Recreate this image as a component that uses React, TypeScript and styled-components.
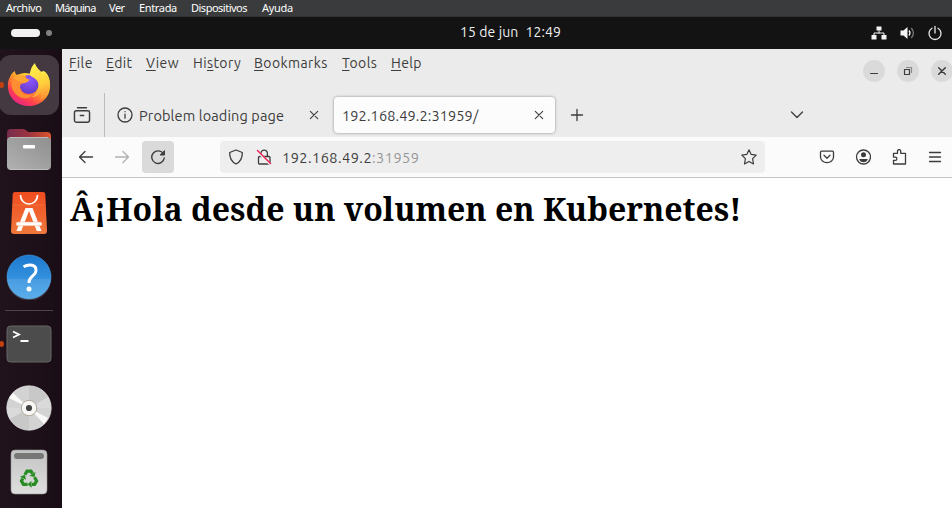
import React from "react";
import styled, { createGlobalStyle } from "styled-components";

const uiFont = `Ubuntu, "Noto Sans", "Open Sans", sans-serif`;

const GlobalStyle = createGlobalStyle`
  * { box-sizing: border-box; }
  body { margin: 0; overflow: hidden; background: #1d1018; }
  svg { display: block; flex: none; }
`;

const Screen = styled.div`
  width: 952px;
  height: 508px;
  display: flex;
  flex-direction: column;
  overflow: hidden;
  white-space: nowrap;
  font-family: ${uiFont};
`;

const HostMenu = styled.nav`
  height: 17px;
  flex: none;
  display: flex;
  padding-left: 6px;
  background: #3a3b3d;
  border-bottom: 1px solid #303133;
  color: #fff;
  font: 11px/16px "Noto Sans", sans-serif;
`;

const HostItem = styled.span<{ $w: number; $ls?: number }>`
  width: ${(p) => p.$w}px;
  letter-spacing: ${(p) => p.$ls ?? 0}px;
`;

const TopBar = styled.header`
  height: 32px;
  flex: none;
  display: grid;
  grid-template-columns: 1fr auto 1fr;
  align-items: center;
  background: #131313;
  color: #f0f0f0;
`;

const Workspaces = styled.div`
  display: flex;
  align-items: center;
  gap: 6px;
  padding-left: 11px;
`;

const Pill = styled.span`
  width: 29px;
  height: 8px;
  border-radius: 4px;
  background: #f2f0f1;
`;

const Dot = styled.span`
  width: 6px;
  height: 6px;
  border-radius: 50%;
  background: #828282;
`;

const Clock = styled.time`
  display: flex;
  gap: 7px;
  width: 101px;
  margin-left: 69px;
  padding-bottom: 2px;
  font-size: 14px;
  line-height: 20px;
  letter-spacing: 0.1px;
`;

const Tray = styled.div`
  display: flex;
  justify-content: flex-end;
  gap: 12px;
  padding-right: 9px;
`;

const Desktop = styled.div`
  flex: 1;
  display: flex;
  min-height: 0;
`;

const Dock = styled.aside`
  width: 62px;
  flex: none;
  padding-top: 4px;
  background: linear-gradient(90deg, #20131c, #1d1019 60%, #190d15);
`;

const DockSlot = styled.div<{ $running?: boolean }>`
  position: relative;
  height: 64px;
  width: 58px;
  display: flex;
  align-items: center;
  justify-content: center;
  &::before {
    content: "";
    display: ${(p) => (p.$running ? "block" : "none")};
    position: absolute;
    left: -1px;
    top: 29px;
    width: 5px;
    height: 6px;
    border-radius: 50%;
    background: #c2410f;
    z-index: 2;
  }
`;

const ActiveTile = styled.div`
  flex: none;
  width: 60px;
  height: 60px;
  border-radius: 12px;
  background: #443940;
  display: flex;
  align-items: center;
  justify-content: center;
`;

const DockRule = styled.div`
  height: 3px;
  margin: 0 9px 0 5px;
  border-top: 1px solid transparent;
  border-bottom: 1px solid transparent;
  background: #4c444a content-box;
`;

const Browser = styled.main`
  flex: 1;
  min-width: 0;
  display: flex;
  flex-direction: column;
  background: #fff;
  color: #3d3d3d;
`;

const Titlebar = styled.div`
  height: 44px;
  flex: none;
  display: flex;
  justify-content: space-between;
  background: #ebebeb;
`;

const Menus = styled.div`
  display: flex;
  padding: 4px 0 0 7px;
`;

const MenuItem = styled.span<{ $w: number }>`
  width: ${(p) => p.$w}px;
  font-size: 14px;
  line-height: 20px;
  letter-spacing: 0.4px;
  u {
    text-underline-offset: 2px;
    text-decoration-thickness: 1px;
  }
`;

const WindowButtons = styled.div`
  display: flex;
  gap: 12px;
  padding: 11px 0 0;
  margin-right: -1px;
`;

const WindowButton = styled.button`
  width: 22px;
  height: 22px;
  padding: 0;
  border: 0;
  border-radius: 50%;
  background: #dadada;
  display: grid;
  place-items: center;
`;

const TabStrip = styled.div`
  height: 44px;
  flex: none;
  display: flex;
  align-items: center;
  background: #ebebeb;
`;

const FirefoxView = styled.div`
  width: 43px;
  height: 44px;
  padding-left: 11px;
  display: flex;
  align-items: center;
  border-right: 1px solid #bdbdbd;
`;

const Tab = styled.div<{ $active?: boolean }>`
  height: 36px;
  width: ${(p) => (p.$active ? 221 : 217)}px;
  margin-left: ${(p) => (p.$active ? 1 : 11)}px;
  padding-left: ${(p) => (p.$active ? 8 : 1)}px;
  padding-right: ${(p) => (p.$active ? 8 : 11)}px;
  display: flex;
  align-items: center;
  border-radius: 4px;
  background: ${(p) => (p.$active ? "#fcfcfc" : "transparent")};
  box-shadow: ${(p) => (p.$active ? "0 0 3px rgba(0,0,0,.4)" : "none")};
`;

const TabLabel = styled.span<{ $indent?: number }>`
  flex: 1;
  padding-top: 2px;
  padding-left: ${(p) => p.$indent ?? 0}px;
  font-size: 14.5px;
  line-height: 20px;
  letter-spacing: 0.12px;
`;

const NewTab = styled.div`
  margin-left: 14px;
  flex: 1;
`;

const AllTabs = styled.div`
  margin-right: 147px;
`;

const NavBar = styled.div`
  height: 41px;
  flex: none;
  display: flex;
  align-items: center;
  padding-left: 16px;
  background: #fbfbfb;
  border-bottom: 1px solid #c4c4c4;
`;

const NavButton = styled.div<{ $ml?: number }>`
  margin-left: ${(p) => p.$ml ?? 0}px;
`;

const Reload = styled.button`
  width: 32px;
  height: 32px;
  margin-left: 12px;
  padding: 0;
  border: 0;
  border-radius: 4px;
  background: #dadada;
  display: grid;
  place-items: center;
`;

const UrlBar = styled.div`
  width: 545px;
  height: 32px;
  margin-left: 46px;
  padding: 0 8px;
  border-radius: 4px;
  background: #eee;
  display: flex;
  align-items: center;
`;

const Address = styled.span`
  flex: 1;
  margin-left: 10px;
  padding-top: 1px;
  font-size: 14.5px;
  line-height: 20px;
  letter-spacing: 0.48px;
`;

const Port = styled.span`
  color: #979797;
`;

const Tools = styled.div`
  display: flex;
  gap: 20px;
  margin-left: 54px;
`;

const Page = styled.article`
  flex: 1;
  padding: 8px;
`;

const Heading = styled.h1`
  margin: 0;
  color: #000;
  font-family: "Noto Serif", "Droid Serif", "DejaVu Serif Condensed", "DejaVu Serif", serif;
  font-size: 32px;
  line-height: 46px;
  font-weight: 700;
`;

type IconProps = { children: React.ReactNode; size?: number; color?: string; sw?: number };

const Icon = ({ children, size = 16, color = "#3d3d3d", sw = 1.3 }: IconProps) => (
  <svg width={size} height={size} viewBox="0 0 16 16" fill="none" stroke={color} strokeWidth={sw} strokeLinecap="round" strokeLinejoin="round">
    {children}
  </svg>
);

const CloseIcon = () => (
  <Icon sw={1.1}><path d="m4.300 4.300 7.400 7.400m0-7.400-7.400 7.400" /></Icon>
);

const FirefoxIcon = () => (
  <svg width="44" height="46" viewBox="0 0 44 46">
    <defs>
      <linearGradient id="ffBody" x1=".85" y1=".1" x2=".2" y2=".95">
        <stop offset="0" stopColor="#fff44f" /><stop offset=".28" stopColor="#ffc52e" />
        <stop offset=".5" stopColor="#ff8a2a" /><stop offset=".75" stopColor="#ff3f4f" /><stop offset="1" stopColor="#e6238b" />
      </linearGradient>
      <radialGradient id="ffGlobe" cx=".5" cy=".25" r=".8">
        <stop offset="0" stopColor="#9059ff" /><stop offset=".6" stopColor="#7344dd" /><stop offset="1" stopColor="#5b3bc1" />
      </radialGradient>
      <linearGradient id="ffFlame" x1=".5" y1="0" x2=".7" y2="1">
        <stop offset="0" stopColor="#fff04d" /><stop offset=".55" stopColor="#ffd03c" /><stop offset="1" stopColor="#ff8a35" />
      </linearGradient>
    </defs>
    <path d="M3 15c1-3 3-5 5-6 0 2 .6 3 2 4 2-1 5-2 8-2l8 1 11-3c4 3 6 7 6 15 0 12-10 20-21 20S2 37 1 26c-.3-4 0-8 2-11Z" fill="url(#ffBody)" />
    <circle cx="22" cy="22.500" r="9.600" fill="url(#ffGlobe)" />
    <path d="M28 1c1 5 5 7 8 11l2-2c4 5 5.500 10 4.500 15-1 6-4 10-9 13 1-4 1-6 0-8-2 4-5 5-9 5 6-3 8-9 7-13-1-5-5-6-9-9 1-5 2-9 5.500-12Z" fill="url(#ffFlame)" />
    <path d="M5 18c4-4 9-3 13-1l3.500 2c-2 1-3 2.500-6 2.500-2 0-3 3-2 6 2 5 7 6 12 5-3 5-10 5-15 1-5-4-7-9-5.500-15.500Z" fill="#ff8d31" />
    <path d="M6 16c3-3 8-3.500 12.500-2 0 2 1 3 4 3.500-.5 2-3 3-6 3-4 0-6-2-10.500-4.500Z" fill="#ffa533" />
  </svg>
);

const FilesIcon = () => (
  <svg width="46" height="44" viewBox="0 0 46 44">
    <defs>
      <linearGradient id="fBack" x1="0" x2="1"><stop stopColor="#762b4e" /><stop offset=".5" stopColor="#9d3340" /><stop offset="1" stopColor="#dd552c" /></linearGradient>
      <linearGradient id="fFront" x1="1" x2="0" y2="1"><stop stopColor="#8f8f8f" /><stop offset="1" stopColor="#b1b1b1" /></linearGradient>
    </defs>
    <path d="M1 18V6q0-4 4-4h12q2 0 3.500 1.500L22 5h19q4 0 4 4v9Z" fill="url(#fBack)" />
    <rect x="1" y="10" width="44" height="33" rx="4" fill="url(#fFront)" />
    <path d="M4 10.500h38M4 42.500h38" stroke="#c8c8c8" strokeWidth=".7" />
    <rect x="17" y="18" width="12" height="3.500" rx="1" fill="#fff" />
  </svg>
);

const SoftwareIcon = () => (
  <svg width="38" height="44" viewBox="0 0 38 44">
    <defs><linearGradient id="bag" y2="1" x2="0"><stop stopColor="#ef4d20" /><stop offset="1" stopColor="#f0783c" /></linearGradient></defs>
    <path d="M5 1h28q2 0 2.300 2L37 40q0 3-3 3H4q-3 0-3-3L2.700 3Q3 1 5 1Z" fill="url(#bag)" />
    <path d="M3 14h32" stroke="#f5844f" strokeWidth=".5" />
    <path d="M10.500 4c0 12 17 12 17 0" fill="none" stroke="#fff" strokeWidth="1.600" />
    <path d="M15.500 17h7L31.500 40h-4.700L19 20 11.200 40H6.500Z" fill="#fff" />
    <rect x="6" y="31" width="26" height="3.800" rx="1.900" fill="#fff" stroke="#f2a27d" strokeWidth=".5" />
  </svg>
);

const HelpIcon = () => (
  <svg width="46" height="46" viewBox="0 0 46 46">
    <defs><linearGradient id="hp" y2="1" x2="0"><stop stopColor="#1c78cf" /><stop offset="1" stopColor="#49a6e9" /></linearGradient></defs>
    <circle cx="23" cy="23" r="22" fill="url(#hp)" stroke="#4ba0df" strokeWidth=".6" />
    <path d="M1 25h44a22 22 0 0 1-44 0Z" fill="#fff" opacity=".1" />
    <path d="M17.500 12.800c6-3.500 13-2 12.500 4-.4 5.500-7.300 5-7 12.200" fill="none" stroke="#fff" strokeWidth="3" />
    <circle cx="23" cy="35" r="2.500" fill="#fff" />
  </svg>
);

const TerminalIcon = () => (
  <svg width="46" height="38" viewBox="0 0 46 38">
    <rect x="1" y="1" width="44" height="36" rx="3.500" fill="#4c4c4c" stroke="#666" strokeWidth="1" />
    <path d="m7 6.500 6 3-6 3M14.500 16h8" stroke="#fff" strokeWidth="1.800" fill="none" />
  </svg>
);

const DiscIcon = () => (
  <svg width="46" height="46" viewBox="0 0 46 46">
    <circle cx="23" cy="23" r="22.200" fill="#d3d3d3" stroke="#e9e9e9" strokeWidth=".7" />
    <path d="M23 23V1a22 22 0 0 1 19 11ZM23 23v22a22 22 0 0 1-19-11Z" fill="#c8c8c8" />
    <path d="M23 23 42 12a22 22 0 0 1 3 11ZM23 23 4 34a22 22 0 0 1-3-11Z" fill="#dadada" />
    <path d="M23 23 3 13l4-5ZM23 23l19 10-4 6Z" fill="#f9f9f7" />
    <circle cx="23" cy="23" r="7.700" fill="#f8f8f6" stroke="#aaa392" strokeWidth=".9" />
    <circle cx="23" cy="23" r="3.100" fill="#454545" />
  </svg>
);

const RecycleArm = ({ angle }: { angle: number }) => (
  <g transform={`rotate(${angle} 19 29.5)`}>
    <path d="m13.800 24.500 2.700-4.500h5l1.800 3" fill="none" stroke="#278c22" strokeWidth="4" />
    <path d="m27 21-1 6.500-6.300-1.800Z" fill="#278c22" />
  </g>
);

const TrashIcon = () => (
  <svg width="38" height="46" viewBox="0 0 38 46">
    <defs><linearGradient id="bin" y2="1" x2="0"><stop stopColor="#c3c3c3" /><stop offset="1" stopColor="#dedede" /></linearGradient></defs>
    <rect x="1" y="1" width="36" height="44" rx="4" fill="url(#bin)" stroke="#999" strokeWidth=".6" />
    <rect x="4" y="4" width="30" height="6" rx="3" fill="#777" />
    <g transform="translate(19 29.800) scale(.8) translate(-19 -29.500)">
      <RecycleArm angle={0} /><RecycleArm angle={120} /><RecycleArm angle={240} />
    </g>
  </svg>
);

export default function App() {
  return (
    <Screen>
      <GlobalStyle />
      <HostMenu>
        <HostItem $w={49} $ls={-0.45}>Archivo</HostItem>
        <HostItem $w={54} $ls={-0.7}>Máquina</HostItem>
        <HostItem $w={30} $ls={-0.5}>Ver</HostItem>
        <HostItem $w={52} $ls={-0.35}>Entrada</HostItem>
        <HostItem $w={71} $ls={-0.5}>Dispositivos</HostItem>
        <HostItem $w={40} $ls={-0.3}>Ayuda</HostItem>
      </HostMenu>
      <TopBar>
        <Workspaces><Pill /><Dot /></Workspaces>
        <Clock><span>15 de jun</span><span>12:49</span></Clock>
        <Tray>
          <svg width="16" height="16" viewBox="0 0 16 16" fill="#f4f4f4">
            <path d="M5.500 1.500h5v4h-5zM.5 10h5v4.500h-5zM10.500 10h5v4.500h-5z" />
            <path d="M8 5.500v3M3 10V8h10v2" fill="none" stroke="#f4f4f4" />
          </svg>
          <svg width="16" height="16" viewBox="0 0 16 16" fill="none" stroke="#f4f4f4" strokeWidth="1.300">
            <path d="M1.500 5.500h3L8.500 2v12l-4-3.500h-3Z" fill="#f4f4f4" stroke="none" />
            <path d="M10 5.500q2 2.500 0 5" />
            <path d="M12.300 3q4.200 5 0 10" stroke="#777" />
          </svg>
          <svg width="16" height="16" viewBox="0 0 16 16" fill="none" stroke="#e8e8e8" strokeWidth="1.300" strokeLinecap="round">
            <path d="M8 1.500V8M5 3.300a6 6 0 1 0 6 0" />
          </svg>
        </Tray>
      </TopBar>
      <Desktop>
        <Dock>
          <DockSlot $running><ActiveTile><FirefoxIcon /></ActiveTile></DockSlot>
          <DockSlot><FilesIcon /></DockSlot>
          <DockSlot><SoftwareIcon /></DockSlot>
          <DockSlot><HelpIcon /></DockSlot>
          <DockRule />
          <DockSlot $running><TerminalIcon /></DockSlot>
          <DockSlot><DiscIcon /></DockSlot>
          <DockSlot><TrashIcon /></DockSlot>
        </Dock>
        <Browser>
          <Titlebar>
            <Menus>
              <MenuItem $w={37}><u>F</u>ile</MenuItem>
              <MenuItem $w={40}><u>E</u>dit</MenuItem>
              <MenuItem $w={47}><u>V</u>iew</MenuItem>
              <MenuItem $w={61}>Hi<u>s</u>tory</MenuItem>
              <MenuItem $w={88}><u>B</u>ookmarks</MenuItem>
              <MenuItem $w={49}><u>T</u>ools</MenuItem>
              <MenuItem $w={40}><u>H</u>elp</MenuItem>
            </Menus>
            <WindowButtons>
              <WindowButton><Icon sw={1.2}><path d="M4.500 10.500h7" /></Icon></WindowButton>
              <WindowButton>
                <Icon sw={1.2}><path d="M4.500 6.500h5v5h-5z" /><path d="M6.500 4.500h5v5" stroke="#8b8b8b" /></Icon>
              </WindowButton>
              <WindowButton><Icon sw={1.5}><path d="m4.700 4.700 6.600 6.600m0-6.600-6.600 6.600" /></Icon></WindowButton>
            </WindowButtons>
          </Titlebar>
          <TabStrip>
            <FirefoxView>
              <Icon size={18}><path d="M4 1.500h8M2.800 4.200h10.400q1.500 0 1.500 1.500v6.800q0 2-2 2H3.300q-2 0-2-2V5.700q0-1.500 1.500-1.500ZM6.500 8.500h3" /></Icon>
            </FirefoxView>
            <Tab>
              <Icon><circle cx="8" cy="8" r="7" /><path d="M8 7.200v4M8 4.600v.1" /></Icon>
              <TabLabel $indent={6}>Problem loading page</TabLabel>
              <CloseIcon />
            </Tab>
            <Tab $active>
              <TabLabel>192.168.49.2:31959/</TabLabel>
              <CloseIcon />
            </Tab>
            <NewTab><Icon><path d="M8 2.500v11M2.500 8h11" /></Icon></NewTab>
            <AllTabs><Icon><path d="m2.500 5 5.500 5.500L13.500 5" /></Icon></AllTabs>
          </TabStrip>
          <NavBar>
            <NavButton><Icon><path d="M14.500 8h-13M7 2.500 1.500 8 7 13.500" /></Icon></NavButton>
            <NavButton $ml={20}><Icon color="#b0b0b0"><path d="M1.500 8h13M9 2.500 14.500 8 9 13.500" /></Icon></NavButton>
            <Reload>
              <Icon sw={1.4}><path d="M13.500 5A6.300 6.300 0 1 0 14.300 9" /><path d="M14.500 2v4h-4Z" fill="#3d3d3d" strokeWidth="1" /></Icon>
            </Reload>
            <UrlBar>
              <Icon><path d="M8 1 14.300 3.500C14.500 9 12 13 8 15 4 13 1.500 9 1.700 3.500Z" /></Icon>
              <NavButton $ml={12}>
                <Icon>
                  <path d="M3.500 7.500h9.500q1 0 1 1V14q0 1-1 1H3.500q-1 0-1-1V8.500q0-1 1-1ZM5 7.500V4.300a3.200 3.200 0 0 1 6.400 0v3.200" />
                  <path d="m1.500 2.500 13 13" stroke="#eee" strokeWidth="2.500" />
                  <path d="m1.500 1.500 13 13" stroke="#f01f55" strokeWidth="1.400" />
                </Icon>
              </NavButton>
              <Address>192.168.49.2<Port>:31959</Port></Address>
              <Icon sw={1.2}><path d="m8 .8 2.200 4.600 5 .7-3.600 3.600.9 5.200L8 12.400l-4.500 2.500.9-5.200L.8 6.100l5-.7Z" /></Icon>
            </UrlBar>
            <Tools>
              <Icon><path d="M2.500 2.200h11q1 0 1 1V8a6.500 5.700 0 0 1-13 0V3.200q0-1 1-1ZM5 6.300l3 3 3-3" /></Icon>
              <Icon><circle cx="8.500" cy="8" r="7" /><circle cx="8.500" cy="5.800" r="2.500" fill="#3d3d3d" stroke="none" /><path d="M4.200 10h8.600q-1 3.300-4.300 3.300T4.200 10Z" fill="#3d3d3d" stroke="none" /></Icon>
              <Icon><path d="M2.500 4.300h4V2.200a1.600 1.600 0 0 1 3.200 0v2.100h4.800V15h-12v-3.700h1.800a1.600 1.600 0 0 0 0-3.200H2.500Z" /></Icon>
              <Icon><path d="M2.500 3.500h11M2.500 8h11M2.500 12.500h11" /></Icon>
            </Tools>
          </NavBar>
          <Page><Heading>Â¡Hola desde un volumen en Kubernetes!</Heading></Page>
        </Browser>
      </Desktop>
    </Screen>
  );
}
